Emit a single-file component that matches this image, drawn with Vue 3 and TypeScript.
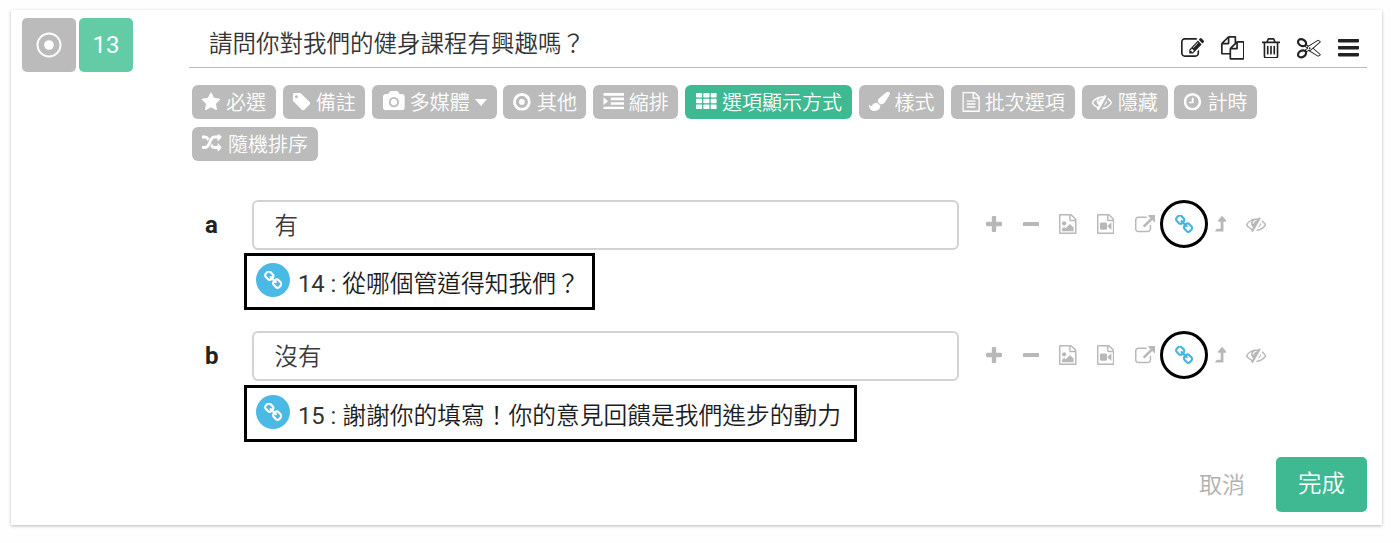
<script setup lang="ts">
interface Glyph { box: string; d: string }
interface Placed { icon: string; x: number; y: number; w: number; h: number }
interface Chip extends Placed { label: string; lead: number; tail: number; active?: boolean; caret?: boolean }
interface Tool { icon: string; cell: number; w: number; h: number; drop?: number; linked?: boolean }
interface Option { key: string; value: string; target: number; note: string }

const page =
  'M1596 380q28 28 48 76t20 88v1152q0 40-28 68t-68 28h-1344q-40 0-68-28t-28-68v-1600q0-40 28-68t68-28h896q40 0 88 20t76 48zm-444-244v376h376q-10-29-22-41l-313-313q-12-12-41-22zm384 1528v-1024h-416q-40 0-68-28t-28-68v-416h-768v1536h1280z'

const glyphs: Record<string, Glyph> = {
  star: { box: '64 32 1664 1588', d: 'M1728 647q0 22-26 48l-363 354 86 500q1 7 1 20 0 21-10.500 35.500t-30.500 14.500q-19 0-40-12l-449-236-449 236q-22 12-40 12-21 0-31.500-14.500t-10.500-35.500q0-6 2-20l86-500-364-354q-25-27-25-48 0-37 56-46l502-73 225-455q19-41 49-41t49 41l225 455 502 73q56 9 56 46z' },
  tag: { box: '128 128 1516 1516', d: 'M576 448q0-53-37.500-90.500t-90.500-37.500-90.500 37.500-37.500 90.500 37.500 90.500 90.500 37.500 90.500-37.500 37.500-90.500zm1067 576q0 53-37 90l-491 492q-39 37-91 37-53 0-90-37l-715-716q-38-37-64.500-101t-26.500-117v-416q0-52 38-90t90-38h416q53 0 117 26.500t102 64.500l715 714q37 39 37 91z' },
  camera: { box: '-64 0 1920 1664', d: 'M896 672q119 0 203.500 84.500t84.500 203.500-84.500 203.500-203.500 84.500-203.500-84.500-84.500-203.500 84.500-203.500 203.500-84.500zm704-416q106 0 181 75t75 181v896q0 106-75 181t-181 75h-1408q-106 0-181-75t-75-181v-896q0-106 75-181t181-75h224l51-136q19-49 69.500-84.500t103.500-35.500h512q53 0 103.500 35.500t69.500 84.500l51 136h224zm-704 1152q185 0 316.500-131.500t131.500-316.500-131.500-316.500-316.500-131.500-316.500 131.500-131.500 316.500 131.500 316.500 316.500 131.500z' },
  target: { box: '0 0 18 18', d: 'M9 0a9 9 0 1 1 0 18a9 9 0 1 1 0-18zm0 2.900a6.100 6.100 0 1 0 0 12.200a6.100 6.100 0 1 0 0-12.200zm0 3.200a2.900 2.900 0 1 1 0 5.800a2.900 2.900 0 1 1 0-5.800z' },
  indent: { box: '0 0 21 16', d: 'M0 0h21v2.600h-21zM7.500 4.500h13.500v2.600h-13.500zM7.500 9h13.500v2.600h-13.500zM0 13.400h21v2.600h-21zM0 4l4.800 4l-4.800 4z' },
  grid: { box: '0 0 21 16', d: 'M.7 0h4.800q.7 0 .7.7v3q0 .7-.7.7h-4.800q-.7 0-.7-.7v-3q0-.7.7-.7zM8.100 0h4.800q.7 0 .7.7v3q0 .7-.7.7h-4.800q-.7 0-.7-.7v-3q0-.7.7-.7zM15.500 0h4.800q.7 0 .7.7v3q0 .7-.7.7h-4.800q-.7 0-.7-.7v-3q0-.7.7-.7zM.7 5.800h4.800q.7 0 .7.7v3q0 .7-.7.7h-4.800q-.7 0-.7-.7v-3q0-.7.7-.7zM8.100 5.800h4.800q.7 0 .7.7v3q0 .7-.7.7h-4.800q-.7 0-.7-.7v-3q0-.7.7-.7zM15.500 5.800h4.800q.7 0 .7.7v3q0 .7-.7.7h-4.800q-.7 0-.7-.7v-3q0-.7.7-.7zM.7 11.600h4.800q.7 0 .7.7v3q0 .7-.7.7h-4.800q-.7 0-.7-.7v-3q0-.7.7-.7zM8.100 11.600h4.800q.7 0 .7.7v3q0 .7-.7.7h-4.800q-.7 0-.7-.7v-3q0-.7.7-.7zM15.500 11.600h4.800q.7 0 .7.7v3q0 .7-.7.7h-4.800q-.7 0-.7-.7v-3q0-.7.7-.7z' },
  brush: { box: '0 0 1792 1792', d: 'M1615 0q70 0 122.500 46.500t52.500 116.500q0 63-45 151-332 629-465 752-97 91-218 91-126 0-216.500-92.500t-90.500-219.500q0-128 92-212l638-579q59-54 130-54zm-909 1034q39 76 106.500 130t150.500 76l1 71q4 213-129.500 347t-348.500 134q-123 0-218-46.500t-152.500-127.500-86.500-183-29-220q7 5 41 30t62 44.500 59 36.500 46 17q41 0 55-37 25-66 57.500-112.500t69.500-76 88-47.500 103-25.500 125-10.500z' },
  text: { box: '128 0 1536 1792', d: page + 'M512 800q0-14 9-23t23-9h704q14 0 23 9t9 23v64q0 14-9 23t-23 9h-704q-14 0-23-9t-9-23v-64zm736 224q14 0 23 9t9 23v64q0 14-9 23t-23 9h-704q-14 0-23-9t-9-23v-64q0-14 9-23t23-9h704zm0 256q14 0 23 9t9 23v64q0 14-9 23t-23 9h-704q-14 0-23-9t-9-23v-64q0-14 9-23t23-9h704z' },
  image: { box: '128 0 1536 1792', d: page + 'M1408 1216v320h-1024v-192l192-192 128 128 384-384zM576 1024q-80 0-136-56t-56-136 56-136 136-56 136 56 56 136-56 136-136 56z' },
  video: { box: '128 0 1536 1792', d: page + 'M896 768q52 0 90 38t38 90v384q0 52-38 90t-90 38h-384q-52 0-90-38t-38-90v-384q0-52 38-90t90-38h384zM1388 770q20 8 20 30v576q0 22-20 30-8 2-12 2-14 0-23-9l-265-266v-90l265-266q9-9 23-9 4 0 12 2z' },
  hidden: { box: '0 256 1792 1376', d: 'M555 1335l78-141q-87-63-136-159t-49-203q0-121 61-225-229 117-381 353 167 258 427 375zm389-759q0-20-14-34t-34-14q-125 0-214.500 89.500t-89.500 214.500q0 20 14 34t34 14 34-14 14-34q0-86 61-147t147-61q20 0 34-14t14-34zm363-191q0 7-1 9-106 189-316 567t-315 566l-49 89q-10 16-28 16-12 0-134-70-16-10-16-28 0-12 44-87-143-65-263.500-173t-208.500-245q-20-31-20-69t20-69q153-235 380-371t496-136q89 0 180 17l54-97q10-16 28-16 5 0 18 6t31 15.500 33 18.500 31.500 18.500 19.500 11.500q16 10 16 27zm37 447q0 139-79 253.500t-209 164.500l280-502q8 45 8 84zm448 128q0 35-20 69-39 64-109 145-150 172-347.500 267t-419.500 95l74-132q212-18 392.500-137t301.500-307q-115-179-282-294l63-112q95 64 182.500 153t144.500 184q20 34 20 69z' },
  clock: { box: '0 0 18 18', d: 'M9 0a9 9 0 1 1 0 18a9 9 0 1 1 0-18zm0 2.600a6.400 6.400 0 1 0 0 12.800a6.400 6.400 0 1 0 0-12.800zM8.300 4.800h1.900v5.800h-4.600v-1.700h2.700z' },
  shuffle: { box: '0 160 1792 1472', d: 'M666 481q-60 92-137 273-22-45-37-72.500t-40.500-63.500-51-56.500-63-35-81.500-14.500h-224q-14 0-23-9t-9-23v-192q0-14 9-23t23-9h224q250 0 410 225zm1126 799q0 14-9 23l-320 320q-9 9-23 9-13 0-22.500-9.500t-9.500-22.500v-192q-32 0-85 .5t-81 1-73-1-71-5-64-10.500-63-18.500-58-28.500-59-40-55-53.500-56-69.500q59-93 136-273 22 45 37 72.500t40.500 63.500 51 56.500 63 35 81.500 14.500h256v-192q0-14 9-23t23-9q12 0 24 10l319 319q9 9 9 23zm0-896q0 14-9 23l-320 320q-9 9-23 9-13 0-22.500-9.500t-9.500-22.500v-192h-256q-48 0-87 15t-69 45-51 61.500-45 77.500q-32 62-78 171-29 66-49.500 111t-54 105-64 100-74 83-90 68.500-106.500 42-128 16.500h-224q-14 0-23-9t-9-23v-192q0-14 9-23t23-9h224q48 0 87-15t69-45 51-61.500 45-77.500q32-62 78-171 29-66 49.500-111t54-105 64-100 74-83 90-68.500 106.500-42 128-16.500h256v-192q0-14 9-23t23-9q12 0 24 10l319 319q9 9 9 23z' },
  edit: { box: '0 128 1784 1408', d: 'M888 1184l116-116-152-152-116 116v56h96v96h56zm440-720q-16-16-33 1l-350 350q-17 17-1 33t33-1l350-350q17-17 1-33zm80 594v190q0 119-84.500 203.500t-203.500 84.500h-832q-119 0-203.500-84.500t-84.500-203.500v-832q0-119 84.500-203.500t203.500-84.500h832q63 0 117 25 15 7 18 23 3 17-9 29l-49 49q-14 14-32 8-23-6-45-6h-832q-66 0-113 47t-47 113v832q0 66 47 113t113 47h832q66 0 113-47t47-113v-126q0-13 9-22l64-64q15-15 35-7t20 29zm-96-738l288 288-672 672h-288v-288zm444 132l-92 92-288-288 92-92q28-28 68-28t68 28l152 152q28 28 28 68t-28 68z' },
  copy: { box: '0 0 1792 1792', d: 'M1696 384q40 0 68 28t28 68v1216q0 40-28 68t-68 28h-960q-40 0-68-28t-28-68v-288h-544q-40 0-68-28t-28-68v-672q0-40 20-88t48-76l408-408q28-28 76-48t88-20h416q40 0 68 28t28 68v328q68-40 128-40h416zm-544 213l-299 299h299v-299zm-640-384l-299 299h299v-299zm196 647l316-316v-416h-384v416q0 40-28 68t-68 28h-416v640h512v-256q0-40 20-88t48-76zm956 804v-1152h-384v416q0 40-28 68t-68 28h-416v640h896z' },
  trash: { box: '192 128 1408 1536', d: 'M704 736v576q0 14-9 23t-23 9h-64q-14 0-23-9t-9-23v-576q0-14 9-23t23-9h64q14 0 23 9t9 23zm256 0v576q0 14-9 23t-23 9h-64q-14 0-23-9t-9-23v-576q0-14 9-23t23-9h64q14 0 23 9t9 23zm256 0v576q0 14-9 23t-23 9h-64q-14 0-23-9t-9-23v-576q0-14 9-23t23-9h64q14 0 23 9t9 23zm128 724v-948h-896v948q0 22 7 40.500t14.500 27 10.500 8.500h832q3 0 10.500-8.500t14.500-27 7-40.500zm-672-1076h448l-48-117q-7-9-17-11h-317q-10 2-17 11zm928 32v64q0 14-9 23t-23 9h-96v948q0 83-47 143.500t-113 60.500h-832q-66 0-113-58.500t-47-141.500v-952h-96q-14 0-23-9t-9-23v-64q0-14 9-23t23-9h309l70-167q15-37 54-63t79-26h320q40 0 79 26t54 63l70 167h309q14 0 23 9t9 23z' },
  cut: { box: '0 256 1792 1408', d: 'M960 896q26 0 45 19t19 45-19 45-45 19-45-19-19-45 19-45 45-19zm300 64l507 398q28 20 25 56-5 35-35 51l-128 64q-13 7-29 7-17 0-31-8l-690-387-110 66q-8 4-12 5 14 49 10 97-7 77-56 147.500t-132 123.500q-132 84-277 84-136 0-222-78-90-84-79-207 7-76 56-147t131-124q132-84 278-84 83 0 151 31 9-13 22-22l122-73-122-73q-13-9-22-22-68 31-151 31-146 0-278-84-82-53-131-124t-56-147q-5-59 15.500-113t63.500-93q85-79 222-79 145 0 277 84 83 52 132 123t56 148q4 48-10 97 4 1 12 5l110 66 690-387q14-8 31-8 16 0 29 7l128 64q30 16 35 51 3 36-25 56zm-681-260q46-42 21-108t-106-117q-92-59-192-59-74 0-113 36-46 42-21 108t106 117q92 59 192 59 74 0 113-36zm-85 745q81-51 106-117t-21-108q-39-36-113-36-100 0-192 59-81 51-106 117t21 108q39 36 113 36 100 0 192-59zm178-613l96 58v-11q0-36 33-56l14-8-79-44-26 26q-3 3-10 11t-12 12q-2 2-4 3.500t-3 2.500zm224 224l96 32 736-576-128-64-768 431v113l-160 96 9 8q2 2 7 6 4 4 11 12t11 12l26 26zm704 416l128-64-520-408-177 138q-2 3-13 7z' },
  menu: { box: '0 0 21 17.500', d: 'M.8 0h19.400q.8 0 .8.8v1.800q0 .8-.8.8h-19.400q-.8 0-.8-.8v-1.800q0-.8.8-.8zM.8 7h19.400q.8 0 .8.8v1.800q0 .8-.8.8h-19.400q-.8 0-.8-.8v-1.800q0-.8.8-.8zM.8 14h19.400q.8 0 .8.8v1.800q0 .8-.8.8h-19.400q-.8 0-.8-.8v-1.800q0-.8.8-.8z' },
  plus: { box: '192 128 1408 1408', d: 'M1600 736v192q0 40-28 68t-68 28h-416v416q0 40-28 68t-68 28h-192q-40 0-68-28t-28-68v-416h-416q-40 0-68-28t-28-68v-192q0-40 28-68t68-28h416v-416q0-40 28-68t68-28h192q40 0 68 28t28 68v416h416q40 0 68 28t28 68z' },
  minus: { box: '192 640 1408 384', d: 'M1600 736v192q0 40-28 68t-68 28h-1216q-40 0-68-28t-28-68v-192q0-40 28-68t68-28h1216q40 0 68 28t28 68z' },
  external: { box: '0 0 1792 1536', d: 'M1408 928v320q0 119-84.500 203.500t-203.500 84.500h-832q-119 0-203.500-84.500t-84.500-203.500v-832q0-119 84.500-203.500t203.500-84.500h704q14 0 23 9t9 23v64q0 14-9 23t-23 9h-704q-66 0-113 47t-47 113v832q0 66 47 113t113 47h832q66 0 113-47t47-113v-320q0-14 9-23t23-9h64q14 0 23 9t9 23zm384-864v512q0 26-19 45t-45 19-45-19l-176-176-652 652q-10 10-23 10t-23-10l-114-114q-10-10-10-23t10-23l652-652-176-176q-19-19-19-45t19-45 45-19h512q26 0 45 19t19 45z' },
  link: { box: '80 80 1632 1568', d: 'M1520 1216q0-40-28-68l-208-208q-28-28-68-28-42 0-72 32 3 3 19 18.500t21.500 21.500 15 19 13 25.500 3.500 27.500q0 40-28 68t-68 28q-15 0-27.500-3.500t-25.500-13-19-15-21.500-21.500-18.500-19q-33 31-33 73 0 40 28 68l206 207q27 27 68 27 40 0 68-26l147-146q28-28 28-67zm-703-705q0-40-28-68l-206-207q-28-28-68-28-39 0-68 27l-147 146q-28 28-28 67 0 40 28 68l208 208q27 27 68 27 42 0 72-31-3-3-19-18.500t-21.500-21.500-15-19-13-25.500-3.500-27.500q0-40 28-68t68-28q15 0 27.500 3.500t25.500 13 19 15 21.500 21.500 18.500 19q33-31 33-73zm895 705q0 120-85 203l-147 146q-83 83-203 83-121 0-204-85l-206-207q-83-83-83-203 0-123 88-209l-88-88q-86 88-208 88-120 0-204-84l-208-208q-84-84-84-204t85-203l147-146q83-83 203-83 121 0 204 85l206 207q83 83 83 203 0 123-88 209l88 88q86-88 208-88 120 0 204 84l208 208q84 84 84 204z' },
  up: { box: '343 64 1030 1408', d: 'M1365 539q-18 37-58 37h-192v864q0 14-9 23t-23 9h-704q-21 0-29-18-8-20 4-35l160-192q9-11 25-11h320v-640h-192q-40 0-58-37-17-37 9-68l320-384q18-22 49-22t49 22l320 384q27 32 9 68z' },
}

const headTools: Tool[] = [
  { icon: 'edit', cell: 40, w: 23, h: 19 },
  { icon: 'copy', cell: 41, w: 23.7, h: 23.7, drop: 1.5 },
  { icon: 'trash', cell: 35, w: 18, h: 20.7, drop: 1.8 },
  { icon: 'cut', cell: 42, w: 23.7, h: 20.5, drop: 2.6 },
  { icon: 'menu', cell: 36, w: 21, h: 17.5, drop: 1.8 },
]

const chips: Chip[] = [
  { icon: 'star', x: 9.7, y: 7.3, w: 18.6, h: 17.8, label: '必選', lead: 34, tail: 10 },
  { icon: 'tag', x: 9.7, y: 8, w: 17.6, h: 17.4, label: '備註', lead: 33, tail: 9.3 },
  { icon: 'camera', x: 11, y: 6, w: 21.8, h: 19.3, label: '多媒體', lead: 38, tail: 10, caret: true },
  { icon: 'target', x: 10, y: 8, w: 17.8, h: 17.8, label: '其他', lead: 33.7, tail: 9 },
  { icon: 'indent', x: 10.3, y: 8, w: 20.8, h: 16.3, label: '縮排', lead: 36, tail: 9.5 },
  { icon: 'grid', x: 11, y: 8, w: 20.8, h: 16, label: '選項顯示方式', lead: 37, tail: 10, active: true },
  { icon: 'brush', x: 10, y: 6.7, w: 21, h: 19.3, label: '樣式', lead: 36, tail: 9.5 },
  { icon: 'text', x: 11.3, y: 6.7, w: 17.6, h: 20.3, label: '批次選項', lead: 34, tail: 10.3 },
  { icon: 'hidden', x: 9.7, y: 9.7, w: 20.3, h: 15.6, label: '隱藏', lead: 36, tail: 10 },
  { icon: 'clock', x: 9.7, y: 8, w: 17.5, h: 17.5, label: '計時', lead: 33, tail: 9.3 },
  { icon: 'shuffle', x: 10, y: 7.5, w: 19.8, h: 17, label: '隨機排序', lead: 36, tail: 10 },
]

const rowTools: Tool[] = [
  { icon: 'plus', cell: 37, w: 16, h: 16 },
  { icon: 'minus', cell: 36.5, w: 16.3, h: 4.8 },
  { icon: 'image', cell: 37, w: 17.5, h: 20 },
  { icon: 'video', cell: 38, w: 17.3, h: 20 },
  { icon: 'external', cell: 41, w: 20.6, h: 17.3 },
  { icon: 'link', cell: 38.5, w: 18.2, h: 18, linked: true },
  { icon: 'up', cell: 33, w: 11.3, h: 15.5 },
  { icon: 'hidden', cell: 38.5, w: 20.2, h: 15 },
]

const options: Option[] = [
  { key: 'a', value: '有', target: 14, note: '從哪個管道得知我們？' },
  { key: 'b', value: '沒有', target: 15, note: '謝謝你的填寫！你的意見回饋是我們進步的動力' },
]
</script>

<template>
  <div class="page">
    <section class="card">
      <aside class="badges">
        <div class="badge kind">
          <svg width="26" height="26" viewBox="0 0 26 26">
            <circle cx="13" cy="13" r="11.500" fill="none" stroke="currentColor" stroke-width="1.900" />
            <circle cx="13" cy="13" r="4.800" fill="currentColor" />
          </svg>
        </div>
        <div class="badge number">13</div>
      </aside>

      <div class="content">
        <header class="head">
          <div class="title">請問你對我們的健身課程有興趣嗎？</div>
          <nav class="head-tools">
            <span v-for="t in headTools" :key="t.icon" class="cell" :style="{ width: t.cell + 'px', paddingTop: (t.drop ?? 0) + 'px' }">
              <svg :width="t.w" :height="t.h" :viewBox="glyphs[t.icon].box" preserveAspectRatio="none"><path :d="glyphs[t.icon].d" /></svg>
            </span>
          </nav>
        </header>

        <div class="chips">
          <div v-for="c in chips" :key="c.label" class="chip" :class="{ active: c.active }" :style="{ paddingRight: c.tail + 'px' }">
            <svg :width="c.lead" height="34">
              <svg :x="c.x" :y="c.y" :width="c.w" :height="c.h" :viewBox="glyphs[c.icon].box" preserveAspectRatio="none"><path :d="glyphs[c.icon].d" /></svg>
            </svg>
            <span>{{ c.label }}</span>
            <i v-if="c.caret" class="caret"></i>
          </div>
        </div>

        <div class="options">
          <div v-for="o in options" :key="o.key" class="option">
            <div class="row">
              <b class="key">{{ o.key }}</b>
              <div class="field">{{ o.value }}</div>
              <div class="tools">
                <span v-for="t in rowTools" :key="t.icon" class="cell" :class="{ linked: t.linked }" :style="{ width: t.cell + 'px' }">
                  <svg :width="t.w" :height="t.h" :viewBox="glyphs[t.icon].box" preserveAspectRatio="none"><path :d="glyphs[t.icon].d" /></svg>
                </span>
              </div>
            </div>
            <div class="note">
              <span class="dot">
                <svg width="18.500" height="18" :viewBox="glyphs.link.box"><path :d="glyphs.link.d" /></svg>
              </span>
              <span class="note-text"><span class="target">{{ o.target }} : </span>{{ o.note }}</span>
            </div>
          </div>
        </div>

        <footer class="foot">
          <span class="cancel">取消</span>
          <span class="done">完成</span>
        </footer>
      </div>
    </section>
  </div>
</template>

<style>
body {
  margin: 0;
  background: #fefefe;
}
</style>

<style scoped>
.page {
  box-sizing: border-box;
  height: 543px;
  padding: 10px 18px 18px 11px;
  overflow: hidden;
  font-family: Roboto, "Noto Sans CJK TC", sans-serif;
  font-weight: 350;
  color: #333;
}
svg {
  display: block;
  flex: none;
  fill: currentColor;
}
.card {
  box-sizing: border-box;
  display: flex;
  height: 515px;
  padding: 8px 15px 0 11px;
  background: #fff;
  box-shadow: 0 1px 3px rgba(0, 0, 0, 0.28);
}
.badges {
  display: flex;
  gap: 3px;
  width: 167px;
  flex: none;
}
.badge {
  display: flex;
  align-items: center;
  justify-content: center;
  width: 54px;
  height: 54px;
  border-radius: 5px;
  color: #fff;
  background: #bbb;
}
.number {
  background: #63cba6;
  font-size: 24px;
  font-weight: 400;
}
.content {
  flex: 1;
  min-width: 0;
}
.head {
  box-sizing: border-box;
  display: flex;
  justify-content: space-between;
  height: 50px;
  border-bottom: 1.500px solid #bbb;
}
.title {
  padding-left: 20px;
  font-size: 23.500px;
  line-height: 52px;
  color: #333;
}
.head-tools {
  display: flex;
  height: 58px;
  margin-right: 1px;
  color: #222;
}
.cell {
  box-sizing: border-box;
  display: flex;
  align-items: center;
  justify-content: center;
  flex: none;
}
.chips {
  display: flex;
  flex-wrap: wrap;
  gap: 8px 6.700px;
  width: 1100px;
  padding: 17px 0 0 3px;
}
.chip {
  display: flex;
  align-items: center;
  height: 34px;
  border-radius: 6px;
  background: #bbb;
  color: #fff;
  font-size: 20px;
  line-height: 34px;
  white-space: nowrap;
}
.chip span {
  padding-top: 1px;
}
.chip.active {
  background: #3eb991;
}
.caret {
  width: 0;
  height: 0;
  margin-left: 5px;
  border: 6px solid transparent;
  border-top: 7px solid #fff;
  border-bottom: 0;
}
.options {
  padding-top: 39px;
}
.option {
  height: 131px;
}
.row {
  display: flex;
  height: 50px;
}
.key {
  width: 47px;
  padding-left: 16px;
  font-size: 24px;
  font-weight: 700;
  line-height: 51px;
  color: #222;
}
.field {
  box-sizing: border-box;
  width: 707px;
  padding-left: 20.500px;
  border: 2px solid #d3d3d3;
  border-radius: 6px;
  font-size: 23.500px;
  line-height: 48px;
  color: #3a3a3a;
}
.tools {
  display: flex;
  height: 48px;
  margin-left: 16.800px;
  color: #b8b8b8;
}
.linked {
  position: relative;
  color: #45b5df;
}
.linked::after {
  content: "";
  position: absolute;
  left: -5.500px;
  top: 0;
  box-sizing: border-box;
  width: 48px;
  height: 48px;
  border: 3px solid #000;
  border-radius: 50%;
}
.note {
  box-sizing: border-box;
  display: flex;
  align-items: center;
  width: fit-content;
  height: 57px;
  margin: 3px 0 0 55px;
  padding: 0 12.500px 0 9px;
  border: 3.500px solid #000;
}
.option + .option .note {
  margin-top: 4px;
}
.dot {
  display: flex;
  align-items: center;
  justify-content: center;
  width: 34px;
  height: 34px;
  margin: 0 8px 3px 0;
  border-radius: 50%;
  background: #4bb9e6;
  color: #fff;
}
.note-text {
  font-size: 23.750px;
  line-height: 49px;
  padding-top: 5px;
  color: #1c1c1c;
  white-space: pre;
}
.target {
  font-weight: 400;
  color: #333;
}
.foot {
  display: flex;
  justify-content: flex-end;
  align-items: center;
  height: 55px;
  margin-top: -5px;
  font-size: 23px;
}
.cancel {
  margin: 0 31px 4px 0;
  color: #b0b0b0;
}
.done {
  width: 91px;
  height: 55px;
  border-radius: 5px;
  background: #3eb991;
  color: #fff;
  font-size: 23.500px;
  line-height: 55px;
  text-align: center;
}
</style>
